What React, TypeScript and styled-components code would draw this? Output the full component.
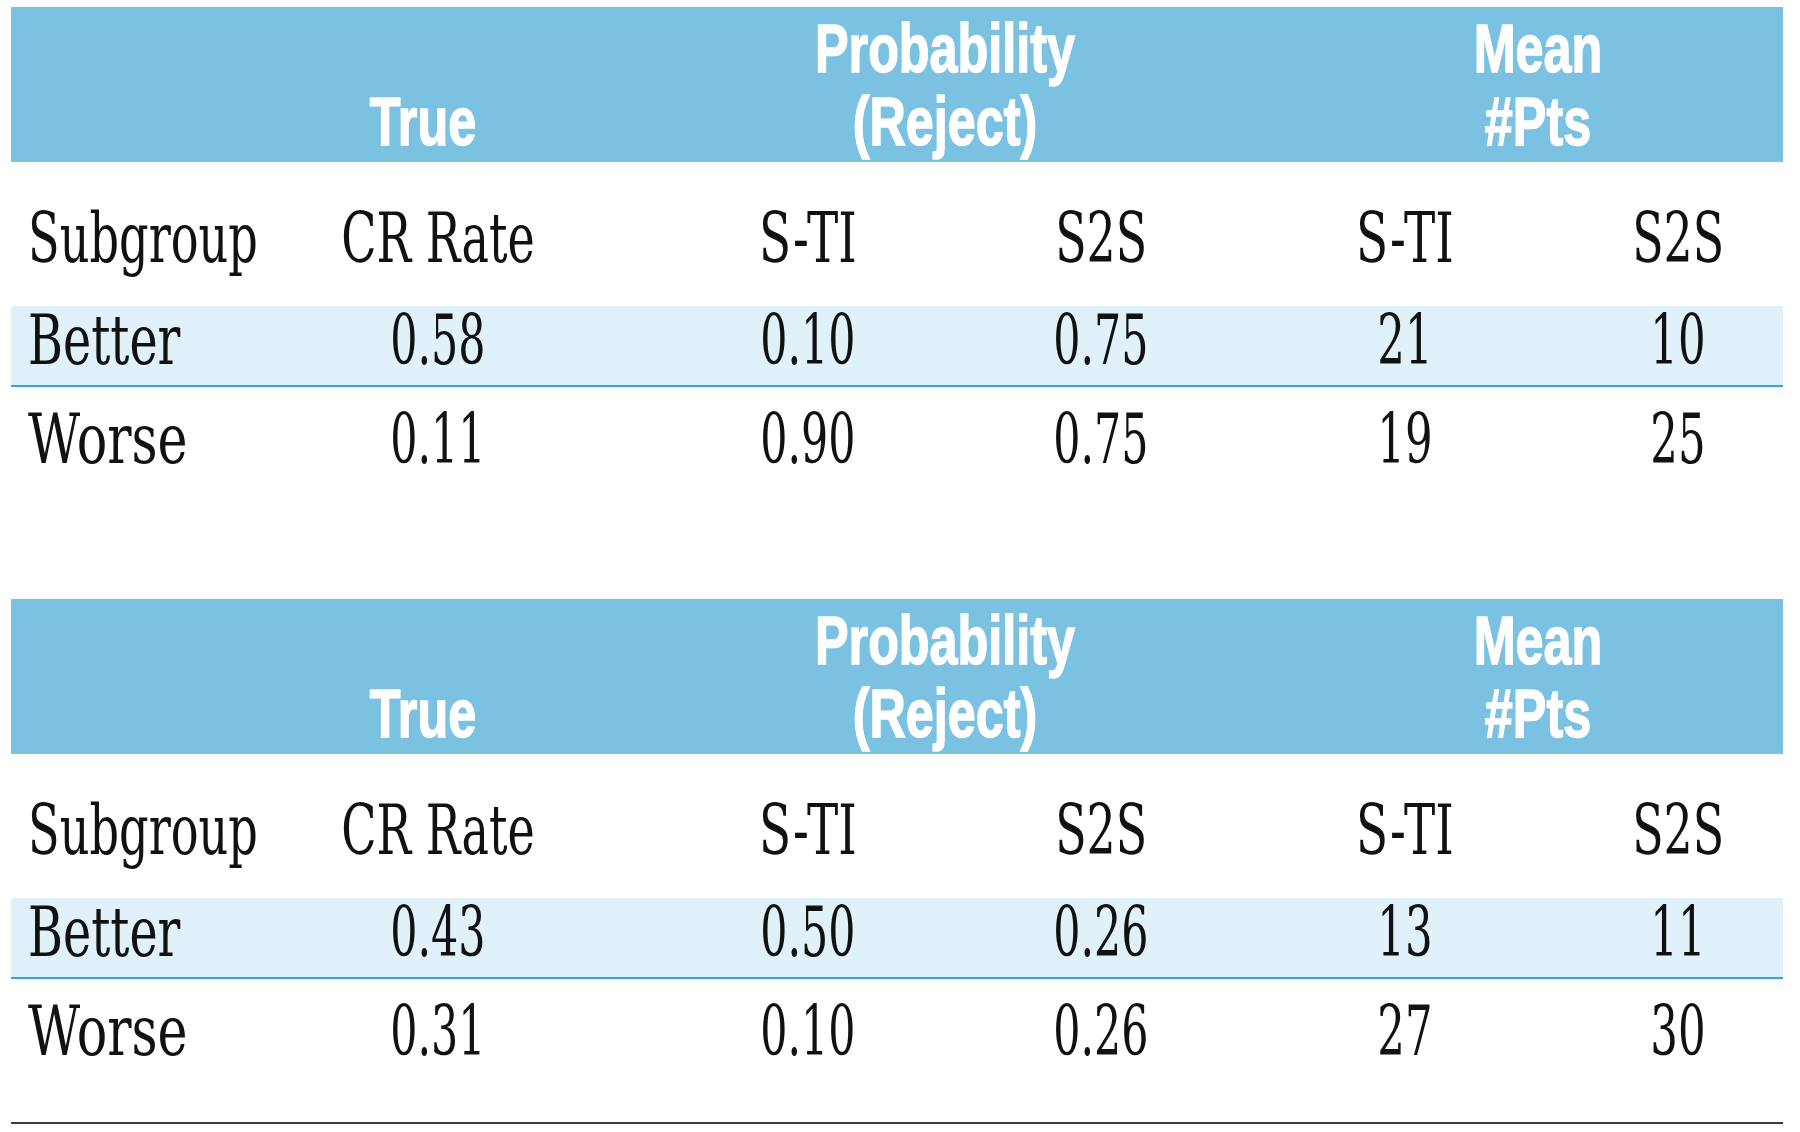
import React from "react";
import styled, { createGlobalStyle } from "styled-components";

const GlobalStyle = createGlobalStyle`
  html, body { margin: 0; padding: 0; background: #ffffff; }
  body { font-family: "DejaVu Serif", serif; }
`;

const Page = styled.div`
  padding: 7px 17px 0 11px;
  width: 1772px;
`;

const Table = styled.section<{ $last?: boolean }>`
  display: flex;
  flex-direction: column;
  margin-bottom: ${(p) => (p.$last ? "0" : "69px")};
  border-bottom: ${(p) => (p.$last ? "2px solid #3a3a3a" : "none")};
`;

const HeaderBand = styled.div`
  display: grid;
  grid-template-columns: 289px 246px 798px 388px;
  padding: 5px 51px 4px 0;
  background: #7bc1e1;
`;

const HeadCell = styled.div`
  align-self: end;
  text-align: center;
  color: #ffffff;
  font-family: "Liberation Sans", Arial, sans-serif;
  font-weight: 700;
  font-size: 68px;
  line-height: 73px;
  white-space: nowrap;
  -webkit-text-stroke: 1.5px #ffffff;
`;

const HeadLine = styled.div`
  transform: scaleX(0.74);
  transform-origin: center;
`;

type RowKind = "sub" | "better" | "worse";

const rowPadding: Record<RowKind, string> = {
  sub: "44px 28px 35px 0",
  better: "2px 28px 12px 0",
  worse: "20px 28px 58px 0",
};

const Row = styled.div<{ $kind: RowKind }>`
  display: grid;
  grid-template-columns: 242px 370px 370px 216px 392px 154px;
  padding: ${(p) => rowPadding[p.$kind]};
  background: ${(p) => (p.$kind === "better" ? "#e0f1fa" : "transparent")};
  border-bottom: ${(p) => (p.$kind === "better" ? "2px solid #2ea8d6" : "none")};
`;

const Cell = styled.div<{ $first?: boolean }>`
  font-family: "DejaVu Serif", serif;
  font-size: 69px;
  line-height: 65px;
  color: #111111;
  white-space: nowrap;
  text-align: ${(p) => (p.$first ? "left" : "center")};
  padding-left: ${(p) => (p.$first ? "17px" : "0")};
`;

const Squeeze = styled.span<{ $k: number; $left?: boolean }>`
  display: inline-block;
  transform: scaleX(${(p) => p.$k});
  transform-origin: ${(p) => (p.$left ? "left center" : "center center")};
`;

type Group = {
  better: string[];
  worse: string[];
};

const groups: Group[] = [
  { better: ["0.58", "0.10", "0.75", "21", "10"], worse: ["0.11", "0.90", "0.75", "19", "25"] },
  { better: ["0.43", "0.50", "0.26", "13", "11"], worse: ["0.31", "0.10", "0.26", "27", "30"] },
];

const subHeads: { text: string; k: number }[] = [
  { text: "CR Rate", k: 0.668 },
  { text: "S-TI", k: 0.68 },
  { text: "S2S", k: 0.665 },
  { text: "S-TI", k: 0.68 },
  { text: "S2S", k: 0.665 },
];

function DataRow({
  kind,
  label,
  labelK,
  values,
}: {
  kind: RowKind;
  label: string;
  labelK: number;
  values: string[];
}) {
  return (
    <Row $kind={kind}>
      <Cell $first>
        <Squeeze $k={labelK} $left>
          {label}
        </Squeeze>
      </Cell>
      {values.map((v, i) => (
        <Cell key={i}>
          <Squeeze $k={v.length > 2 ? 0.62 : 0.63}>{v}</Squeeze>
        </Cell>
      ))}
    </Row>
  );
}

function ResultTable({ group, last }: { group: Group; last?: boolean }) {
  return (
    <Table $last={last}>
      <HeaderBand>
        <div />
        <HeadCell>
          <HeadLine>True</HeadLine>
        </HeadCell>
        <HeadCell>
          <HeadLine>Probability</HeadLine>
          <HeadLine>(Reject)</HeadLine>
        </HeadCell>
        <HeadCell>
          <HeadLine>Mean</HeadLine>
          <HeadLine>#Pts</HeadLine>
        </HeadCell>
      </HeaderBand>
      <Row $kind="sub">
        <Cell $first>
          <Squeeze $k={0.67} $left>
            Subgroup
          </Squeeze>
        </Cell>
        {subHeads.map((h, i) => (
          <Cell key={i}>
            <Squeeze $k={h.k}>{h.text}</Squeeze>
          </Cell>
        ))}
      </Row>
      <DataRow kind="better" label="Better" labelK={0.69} values={group.better} />
      <DataRow kind="worse" label="Worse" labelK={0.735} values={group.worse} />
    </Table>
  );
}

export default function App() {
  return (
    <>
      <GlobalStyle />
      <Page>
        <ResultTable group={groups[0]} />
        <ResultTable group={groups[1]} last />
      </Page>
    </>
  );
}
